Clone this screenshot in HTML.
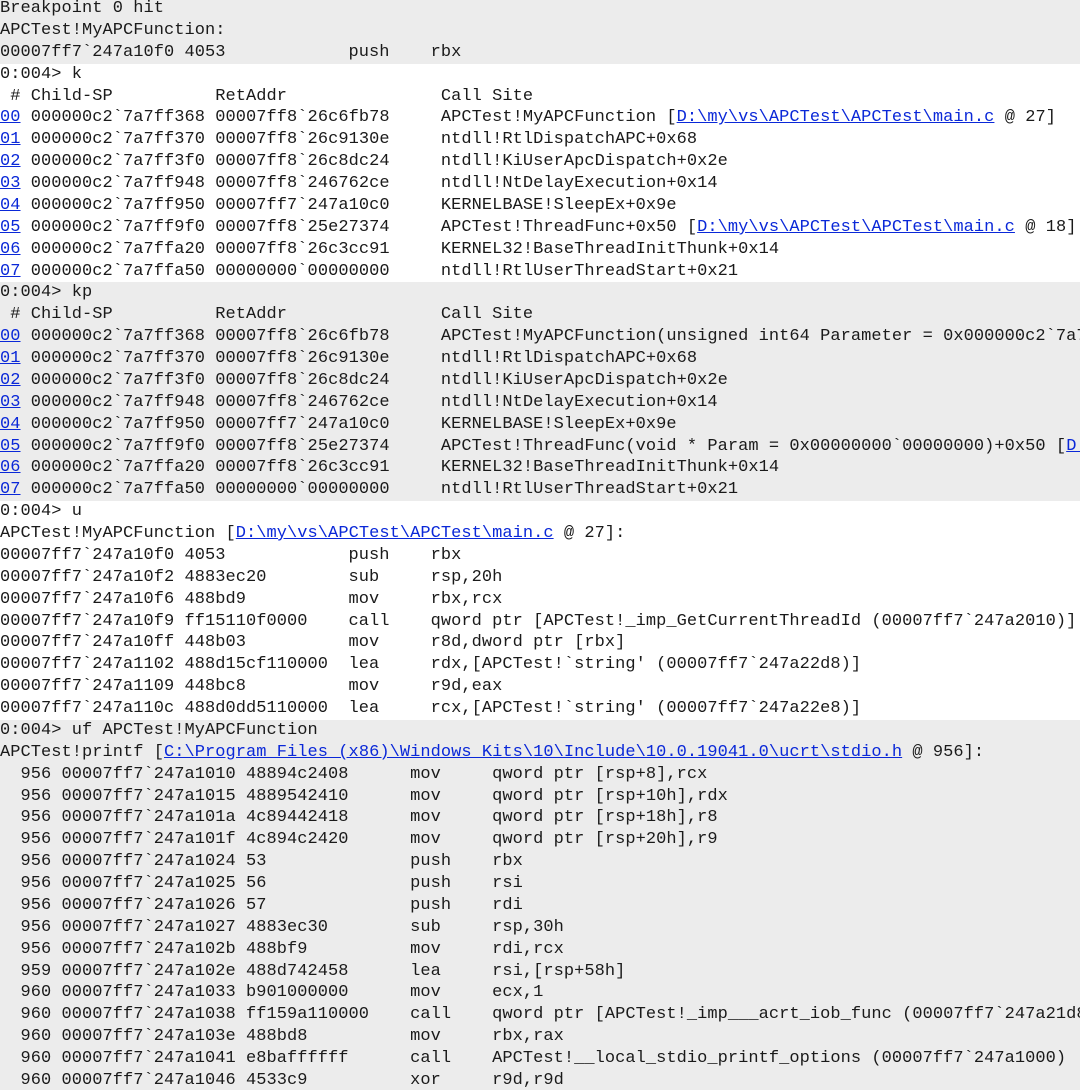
<!DOCTYPE html>
<html><head><meta charset="utf-8"><style>
html,body{margin:0;padding:0;background:#fff;width:1080px;height:1090px;overflow:hidden}
.w{margin-top:-2px}
pre{margin:0;font-family:"Liberation Mono",monospace;font-size:17px;line-height:21.875px;letter-spacing:0.05px;color:#1a1a1a;white-space:pre;overflow:hidden}
.g{background:#ececec}
a{color:#0a28d8;text-decoration:underline}
</style></head><body><div class="w">
<pre class="g">Breakpoint 0 hit
APCTest!MyAPCFunction:
00007ff7`247a10f0 4053            push    rbx</pre>
<pre>0:004&gt; k
 # Child-SP          RetAddr               Call Site
<a>00</a> 000000c2`7a7ff368 00007ff8`26c6fb78     APCTest!MyAPCFunction [<a>D:\my\vs\APCTest\APCTest\main.c</a> @ 27]
<a>01</a> 000000c2`7a7ff370 00007ff8`26c9130e     ntdll!RtlDispatchAPC+0x68
<a>02</a> 000000c2`7a7ff3f0 00007ff8`26c8dc24     ntdll!KiUserApcDispatch+0x2e
<a>03</a> 000000c2`7a7ff948 00007ff8`246762ce     ntdll!NtDelayExecution+0x14
<a>04</a> 000000c2`7a7ff950 00007ff7`247a10c0     KERNELBASE!SleepEx+0x9e
<a>05</a> 000000c2`7a7ff9f0 00007ff8`25e27374     APCTest!ThreadFunc+0x50 [<a>D:\my\vs\APCTest\APCTest\main.c</a> @ 18]
<a>06</a> 000000c2`7a7ffa20 00007ff8`26c3cc91     KERNEL32!BaseThreadInitThunk+0x14
<a>07</a> 000000c2`7a7ffa50 00000000`00000000     ntdll!RtlUserThreadStart+0x21</pre>
<pre class="g">0:004&gt; kp
 # Child-SP          RetAddr               Call Site
<a>00</a> 000000c2`7a7ff368 00007ff8`26c6fb78     APCTest!MyAPCFunction(unsigned int64 Parameter = 0x000000c2`7a7ff368)
<a>01</a> 000000c2`7a7ff370 00007ff8`26c9130e     ntdll!RtlDispatchAPC+0x68
<a>02</a> 000000c2`7a7ff3f0 00007ff8`26c8dc24     ntdll!KiUserApcDispatch+0x2e
<a>03</a> 000000c2`7a7ff948 00007ff8`246762ce     ntdll!NtDelayExecution+0x14
<a>04</a> 000000c2`7a7ff950 00007ff7`247a10c0     KERNELBASE!SleepEx+0x9e
<a>05</a> 000000c2`7a7ff9f0 00007ff8`25e27374     APCTest!ThreadFunc(void * Param = 0x00000000`00000000)+0x50 [<a>D:</a>
<a>06</a> 000000c2`7a7ffa20 00007ff8`26c3cc91     KERNEL32!BaseThreadInitThunk+0x14
<a>07</a> 000000c2`7a7ffa50 00000000`00000000     ntdll!RtlUserThreadStart+0x21</pre>
<pre>0:004&gt; u
APCTest!MyAPCFunction [<a>D:\my\vs\APCTest\APCTest\main.c</a> @ 27]:
00007ff7`247a10f0 4053            push    rbx
00007ff7`247a10f2 4883ec20        sub     rsp,20h
00007ff7`247a10f6 488bd9          mov     rbx,rcx
00007ff7`247a10f9 ff15110f0000    call    qword ptr [APCTest!_imp_GetCurrentThreadId (00007ff7`247a2010)]
00007ff7`247a10ff 448b03          mov     r8d,dword ptr [rbx]
00007ff7`247a1102 488d15cf110000  lea     rdx,[APCTest!`string' (00007ff7`247a22d8)]
00007ff7`247a1109 448bc8          mov     r9d,eax
00007ff7`247a110c 488d0dd5110000  lea     rcx,[APCTest!`string' (00007ff7`247a22e8)]</pre>
<pre class="g">0:004&gt; uf APCTest!MyAPCFunction
APCTest!printf [<a>C:\Program Files (x86)\Windows Kits\10\Include\10.0.19041.0\ucrt\stdio.h</a> @ 956]:
  956 00007ff7`247a1010 48894c2408      mov     qword ptr [rsp+8],rcx
  956 00007ff7`247a1015 4889542410      mov     qword ptr [rsp+10h],rdx
  956 00007ff7`247a101a 4c89442418      mov     qword ptr [rsp+18h],r8
  956 00007ff7`247a101f 4c894c2420      mov     qword ptr [rsp+20h],r9
  956 00007ff7`247a1024 53              push    rbx
  956 00007ff7`247a1025 56              push    rsi
  956 00007ff7`247a1026 57              push    rdi
  956 00007ff7`247a1027 4883ec30        sub     rsp,30h
  956 00007ff7`247a102b 488bf9          mov     rdi,rcx
  959 00007ff7`247a102e 488d742458      lea     rsi,[rsp+58h]
  960 00007ff7`247a1033 b901000000      mov     ecx,1
  960 00007ff7`247a1038 ff159a110000    call    qword ptr [APCTest!_imp___acrt_iob_func (00007ff7`247a21d8)]
  960 00007ff7`247a103e 488bd8          mov     rbx,rax
  960 00007ff7`247a1041 e8baffffff      call    APCTest!__local_stdio_printf_options (00007ff7`247a1000)
  960 00007ff7`247a1046 4533c9          xor     r9d,r9d</pre>
</div></body></html>
